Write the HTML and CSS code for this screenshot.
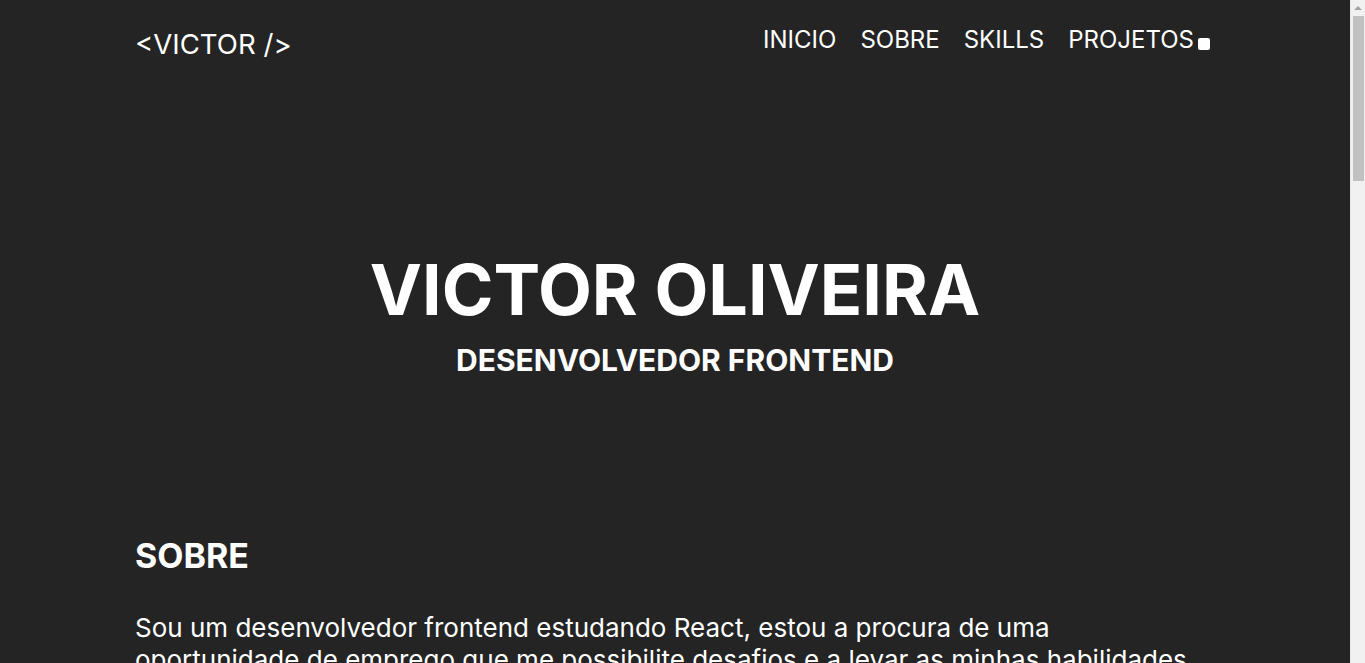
FILE: index.html
```html
<!DOCTYPE html>
<html lang="pt-BR">
<head>
<meta charset="utf-8">
<title>Victor Oliveira</title>
<link rel="stylesheet" href="styles.css">
</head>
<body>
<div class="container">
  <header class="header">
    <div class="logo">&lt;VICTOR /&gt;</div>
    <nav class="nav">
      <a href="#inicio">INICIO</a>
      <a href="#sobre">SOBRE</a>
      <a href="#skills">SKILLS</a>
      <a href="#projetos">PROJETOS</a>
      <span class="toggle"></span>
    </nav>
  </header>
  <section class="hero" id="inicio">
    <h1 class="hero-title">VICTOR OLIVEIRA</h1>
    <h2 class="hero-sub">DESENVOLVEDOR FRONTEND</h2>
  </section>
  <section class="about" id="sobre">
    <h2 class="section-title">SOBRE</h2>
    <p class="about-text">Sou um desenvolvedor frontend estudando React, estou a procura de uma oportunidade de emprego que me possibilite desafios e a levar as minhas habilidades ao próximo nível.</p>
  </section>
  <section class="about" id="skills">
    <h2 class="section-title">SKILLS</h2>
    <p class="about-text">HTML, CSS, JavaScript, React</p>
  </section>
  <section class="about" id="projetos">
    <h2 class="section-title">PROJETOS</h2>
    <p class="about-text">Em breve.</p>
  </section>
</div>
<div class="scrollbar" aria-hidden="true">
  <div class="scroll-arrow"></div>
  <div class="scroll-thumb"></div>
</div>
</body>
</html>
```
FILE: styles.css
```css
* { box-sizing: border-box; }
html, body { margin: 0; padding: 0; }
body {
  background: #242424;
  color: #ffffff;
  font-family: Inter, "Noto Sans", sans-serif;
  padding-right: 15px;
}
.container {
  max-width: 1080px;
  margin: 0 auto;
}
.header {
  display: flex;
  justify-content: space-between;
  align-items: flex-start;
  padding-top: 26px;
}
.logo {
  font-size: 27.6px;
  line-height: 36px;
}
.nav {
  display: flex;
  align-items: flex-start;
  gap: 24px;
  padding-right: 5px;
}
.nav a {
  color: #ffffff;
  text-decoration: none;
  font-size: 24px;
  line-height: 28px;
}
.toggle {
  width: 12px;
  height: 12px;
  background: #ffffff;
  border-radius: 2px;
  margin-left: -20px;
  margin-top: 12px;
}
.hero {
  text-align: center;
  padding-top: 186px;
  padding-bottom: 158px;
}
.hero-title {
  margin: 0;
  font-size: 70px;
  font-weight: 700;
  line-height: 84px;
}
.hero-sub {
  margin: 10px 0 0;
  font-size: 30px;
  font-weight: 700;
  line-height: 36px;
}
.section-title {
  margin: 0 0 36px;
  font-size: 34px;
  font-weight: 700;
  line-height: 40px;
}
.about-text {
  margin: 0 0 80px;
  font-size: 26px;
  line-height: 32px;
}
.scrollbar {
  position: fixed;
  top: 0;
  right: 0;
  width: 15px;
  height: 100vh;
  background: #f1f1f1;
  border-left: 1px solid #e8e8e8;
}
.scroll-arrow {
  width: 0;
  height: 0;
  margin: 6px auto 0;
  border-left: 4px solid transparent;
  border-right: 4px solid transparent;
  border-bottom: 4px solid #a3a3a3;
}
.scroll-thumb {
  margin: 6px 1px 0 2px;
  height: 165px;
  background: #c1c1c1;
}
```
